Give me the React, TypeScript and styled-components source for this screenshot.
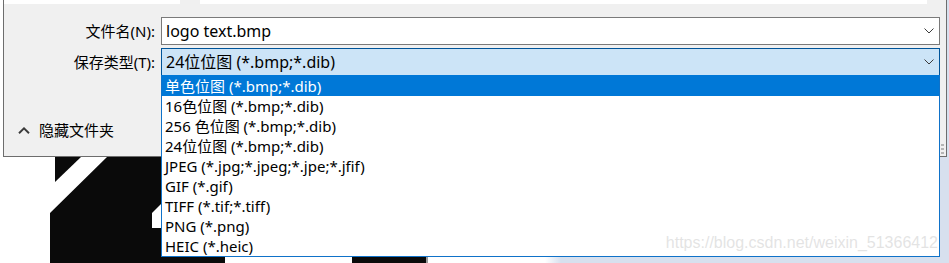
import styled, { createGlobalStyle } from "styled-components";

const GlobalStyle = createGlobalStyle`
  html, body {
    margin: 0;
    padding: 0;
    background: #ffffff;
  }
  body {
    font-family: "Noto Sans", "Noto Sans CJK SC", sans-serif;
    color: #000;
  }
`;

const fileTypes = [
  "单色位图 (*.bmp;*.dib)",
  "16色位图 (*.bmp;*.dib)",
  "256 色位图 (*.bmp;*.dib)",
  "24位位图 (*.bmp;*.dib)",
  "JPEG (*.jpg;*.jpeg;*.jpe;*.jfif)",
  "GIF (*.gif)",
  "TIFF (*.tif;*.tiff)",
  "PNG (*.png)",
  "HEIC (*.heic)",
];

const ChevronDown = () => (
  <svg width="10" height="6" viewBox="0 0 10 6">
    <path d="M0.5 0.5 L5 5 L9.5 0.5" fill="none" stroke="#3c3c3c" strokeWidth="1" />
  </svg>
);

const ChevronUp = () => (
  <svg width="12" height="7" viewBox="0 0 12 7">
    <path d="M1 6.2 L6 1.3 L11 6.2" fill="none" stroke="#3a3a3a" strokeWidth="1.9" />
  </svg>
);

export default function App() {
  return (
    <Page>
      <GlobalStyle />
      <DialogRow>
        <Gutter />
        <Dialog>
          <TopPanes>
            <NavPane />
            <Splitter />
            <FilePane />
          </TopPanes>
          <Form>
            <Label>文件名(N):</Label>
            <ComboBox>
              <ComboText>logo text.bmp</ComboText>
              <ChevronDown />
            </ComboBox>
            <Label>保存类型(T):</Label>
            <ComboBox $open>
              <ComboText>24位位图 (*.bmp;*.dib)</ComboText>
              <ChevronDown />
              <DropList>
                {fileTypes.map((t, i) => (
                  <Option key={t} $selected={i === 0}>
                    {t}
                  </Option>
                ))}
                <Watermark>https://blog.csdn.net/weixin_51366412</Watermark>
              </DropList>
            </ComboBox>
          </Form>
          <Footer>
            <HideFolders>
              <ChevronUp />
              <span>隐藏文件夹</span>
            </HideFolders>
            <Grip>
              <i />
              <i />
              <i />
            </Grip>
          </Footer>
        </Dialog>
      </DialogRow>
      <Backdrop>
        <svg width="949" height="106" viewBox="0 0 949 106">
          <defs>
            <linearGradient id="fade" x1="0" x2="1" y1="0" y2="0">
              <stop offset="0" stopColor="#ffffff" />
              <stop offset="1" stopColor="#d7e0ee" />
            </linearGradient>
          </defs>
          <rect x="0" y="0" width="545" height="106" fill="#ffffff" />
          <rect x="545" y="0" width="16" height="106" fill="url(#fade)" />
          <polygon points="55,0 81,0 55,25" fill="#0a0a0a" />
          <polygon points="50,56 107,0 170,0 170,100 225,100 225,106 50,106" fill="#0a0a0a" />
          <polygon points="152,56 161,47 161,71 152,71" fill="#ffffff" />
          <rect x="352" y="100" width="74" height="6" fill="#0a0a0a" />
          <rect x="426" y="100" width="2" height="6" fill="#9a9a9a" />
        </svg>
      </Backdrop>
    </Page>
  );
}

const Page = styled.div`
  width: 949px;
  height: 263px;
  overflow: hidden;
  background: #d7e0ee;
  display: flex;
  flex-direction: column;
`;

const DialogRow = styled.div`
  display: flex;
  height: 157px;
`;

const Gutter = styled.div`
  width: 3px;
  background: #ffffff;
`;

const Dialog = styled.div`
  width: 944px;
  box-sizing: border-box;
  background: #f0f0f0;
  border: 1px solid #6d6d6d;
  border-top: none;
  display: flex;
  flex-direction: column;
`;

const TopPanes = styled.div`
  display: flex;
  height: 4px;
  padding-right: 19px;
`;

const NavPane = styled.div`
  width: 176px;
  background: #ffffff;
`;

const Splitter = styled.div`
  width: 20px;
`;

const FilePane = styled.div`
  flex: 1;
  background: #ffffff;
`;

const Form = styled.div`
  display: grid;
  grid-template-columns: 157px 779px;
  row-gap: 3px;
  margin-top: 13px;
  position: relative;
  z-index: 2;
`;

const Label = styled.div`
  font-size: 15px;
  height: 28px;
  line-height: 28px;
  text-align: right;
  padding-right: 6px;
  color: #000;
`;

const ComboBox = styled.div<{ $open?: boolean }>`
  position: relative;
  height: 28px;
  box-sizing: border-box;
  display: flex;
  align-items: center;
  padding: 0 5px 0 4px;
  background: ${(p) => (p.$open ? "#cce4f7" : "#ffffff")};
  border: 1px solid ${(p) => (p.$open ? "#005499" : "#7a7a7a")};
`;

const ComboText = styled.span`
  flex: 1;
  font-size: 16px;
  line-height: 26px;
  white-space: nowrap;
`;

const DropList = styled.div`
  position: absolute;
  top: 100%;
  left: -1px;
  width: 779px;
  height: 182px;
  box-sizing: border-box;
  background: #ffffff;
  border: 1px solid #0f72c9;
  border-top-color: #0078d7;
  overflow: hidden;
`;

const Option = styled.div<{ $selected?: boolean }>`
  height: 20px;
  line-height: 20px;
  font-size: 15px;
  padding-left: 3px;
  white-space: nowrap;
  background: ${(p) => (p.$selected ? "#0078d7" : "transparent")};
  color: ${(p) => (p.$selected ? "#ffffff" : "#000000")};
`;

const Watermark = styled.div`
  position: absolute;
  right: 1px;
  top: 157px;
  font-family: "Liberation Sans", Arial, sans-serif;
  font-size: 16px;
  line-height: 20px;
  color: rgba(200, 200, 200, 0.5);
  white-space: nowrap;
`;

const Footer = styled.div`
  flex: 1;
  display: grid;
  grid-template-columns: 1fr auto;
`;

const HideFolders = styled.div`
  align-self: start;
  margin-top: 44px;
  height: 20px;
  display: flex;
  align-items: center;
  gap: 9px;
  padding-left: 14px;
  font-size: 15px;
  color: #000;
  line-height: 20px;
`;

const Grip = styled.div`
  align-self: end;
  margin: 0 2px 2px 0;
  display: flex;
  flex-direction: column;
  gap: 2px;

  i {
    display: block;
    width: 3px;
    height: 2px;
    background: #b5b5b5;
  }
`;

const Backdrop = styled.div`
  height: 106px;
  line-height: 0;
`;
